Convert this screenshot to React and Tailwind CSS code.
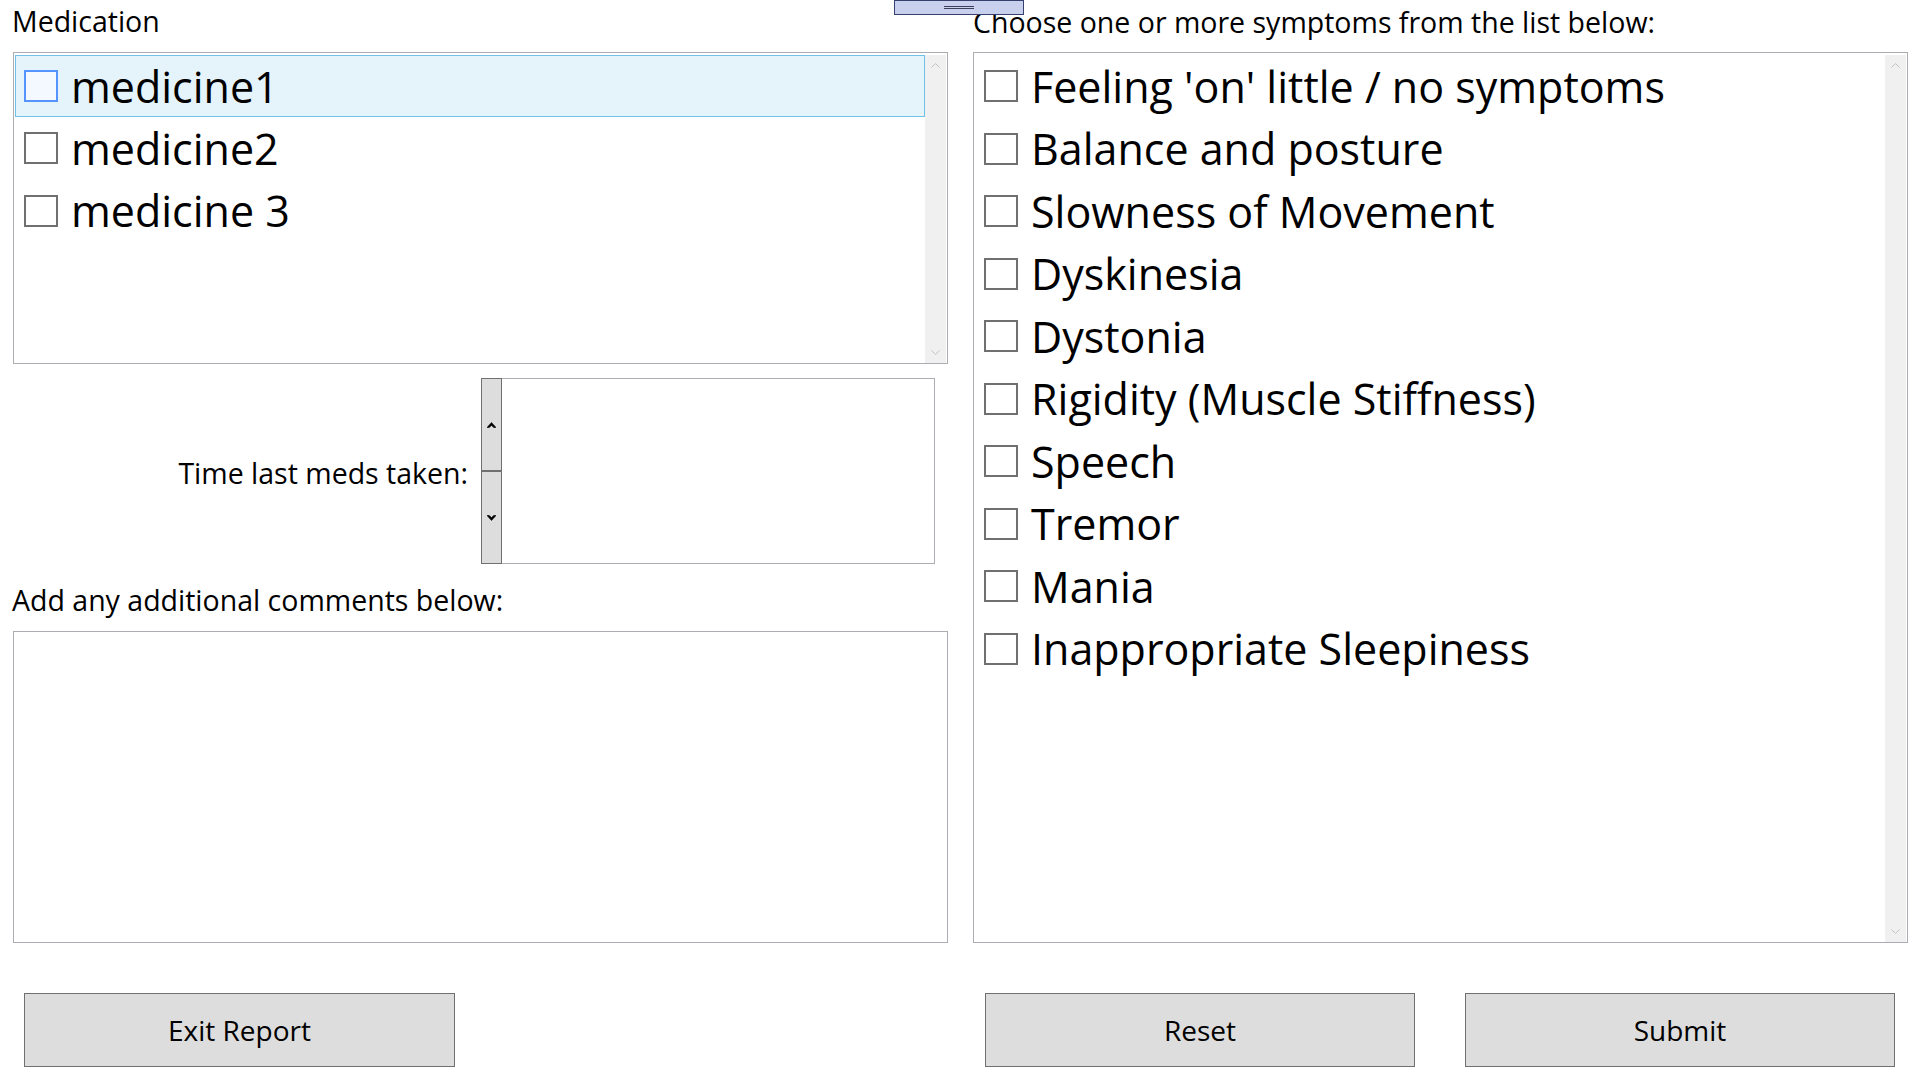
import React from "react";

function Box({ hover }) {
  return (
    <div
      className={
        hover
          ? "w-[34px] h-[32px] shrink-0 border-2 border-[#5593ff] bg-[#f3f9ff]"
          : "w-[34px] h-[32px] shrink-0 border-2 border-[#707070] bg-white"
      }
    />
  );
}

function Row({ label, hover }) {
  return (
    <div
      className={
        hover
          ? "h-[62px] flex items-center pl-[8px] border border-[#70c0e7] bg-[#e5f3fb]"
          : "h-[62.5px] flex items-center pl-[8px] border border-transparent"
      }
    >
      <Box hover={hover} />
      <span className="ml-[13px] text-[43px] leading-none whitespace-nowrap">{label}</span>
    </div>
  );
}

function Chevron({ down, color = "#c2c3c9" }) {
  return (
    <svg width="9" height="5" viewBox="0 0 9 5" className="block">
      <polyline
        points={down ? "0.5,0.5 4.5,4.5 8.5,0.5" : "0.5,4.5 4.5,0.5 8.5,4.5"}
        fill="none"
        stroke={color}
        strokeWidth="1"
      />
    </svg>
  );
}

function ScrollBar() {
  return (
    <div className="w-[21px] mt-[2px] mr-[1px] bg-[#f0f0f0] flex flex-col justify-between">
      <div className="h-[21px] flex items-center justify-center">
        <Chevron />
      </div>
      <div className="h-[21px] flex items-center justify-center">
        <Chevron down />
      </div>
    </div>
  );
}

function SpinArrow({ down }) {
  return (
    <svg width="9" height="6" viewBox="0 0 9 6" className="block">
      <polygon
        points={
          down
            ? "0,0.5 4.5,5.5 9,0.5 6.8,0.5 4.5,2.6 2.2,0.5"
            : "0,5.5 4.5,0.5 9,5.5 6.8,5.5 4.5,3.4 2.2,5.5"
        }
        fill="#000"
        stroke="#000"
        strokeWidth="0.6"
        strokeLinejoin="round"
      />
    </svg>
  );
}

export default function App() {
  const meds = ["medicine1", "medicine2", "medicine 3"];
  const symptoms = [
    "Feeling 'on' little / no symptoms",
    "Balance and posture",
    "Slowness of Movement",
    "Dyskinesia",
    "Dystonia",
    "Rigidity (Muscle Stiffness)",
    "Speech",
    "Tremor",
    "Mania",
    "Inappropriate Sleepiness",
  ];

  return (
    <div className="relative w-[1920px] h-[1076px] bg-white overflow-hidden font-['Open_Sans','Noto_Sans',sans-serif] text-black">
      <div className="grid grid-cols-[935px_935px] gap-x-[25px] pl-[13px]">
        {/* Left column */}
        <div className="flex flex-col">
          <div className="h-[52px] text-[28.5px] leading-[42px] -ml-[1px] whitespace-nowrap">Medication</div>
          <div className="h-[312px] border border-[#abadb3] flex">
            <div className="flex-1 flex flex-col pt-[2px] pl-[1px]">
              {meds.map((m, i) => (
                <Row key={m} label={m} hover={i === 0} />
              ))}
            </div>
            <ScrollBar />
          </div>

          <div className="mt-[14px] h-[186px] flex">
            <div className="w-[455px] flex items-center justify-end text-[28.5px] leading-none pt-[4px] whitespace-nowrap">
              Time last meds taken:
            </div>
            <div className="ml-[13px] w-[454px] flex">
              <div className="w-[21px] flex flex-col">
                <div className="flex-1 bg-[#dddddd] border border-b-0 border-[#707070] flex items-center justify-center">
                  <SpinArrow />
                </div>
                <div className="flex-1 bg-[#dddddd] border border-t-2 border-[#707070] flex items-center justify-center">
                  <SpinArrow down />
                </div>
              </div>
              <div className="flex-1 border border-l-0 border-[#abadb3] bg-white" />
            </div>
          </div>

          <div className="mt-[18px] mb-[13px] h-[36px] text-[28.5px] leading-[36px] -ml-[1px] whitespace-nowrap">
            Add any additional comments below:
          </div>
          <div className="h-[312px] border border-[#abadb3] bg-white" />

          <div className="mt-[50px] h-[74px] flex">
            <div className="ml-[11px] w-[431px] h-full bg-[#dddddd] border border-[#707070] flex items-center justify-center text-[28px]">
              Exit Report
            </div>
          </div>
        </div>

        {/* Right column */}
        <div className="flex flex-col">
          <div className="h-[52px] text-[28.5px] leading-[44px] whitespace-nowrap">
            Choose one or more symptoms from the list below:
          </div>
          <div className="h-[891px] border border-[#abadb3] flex">
            <div className="flex-1 flex flex-col pt-[2px] pl-[1px]">
              {symptoms.map((s) => (
                <Row key={s} label={s} />
              ))}
            </div>
            <ScrollBar />
          </div>
          <div className="mt-[50px] h-[74px] flex gap-[50px] pl-[12px]">
            <div className="w-[430px] h-full bg-[#dddddd] border border-[#707070] flex items-center justify-center text-[28px]">
              Reset
            </div>
            <div className="w-[430px] h-full bg-[#dddddd] border border-[#707070] flex items-center justify-center text-[28px]">
              Submit
            </div>
          </div>
        </div>
      </div>

      {/* Window splitter grabber overlay */}
      <div className="absolute left-[894px] top-0 w-[130px] h-[15px] bg-[#c8d0ee] border border-[#36406e] flex flex-col items-center justify-center gap-[1px] z-10">
        <div className="w-[30px] h-[1px] bg-[#3a3f5c]" />
        <div className="w-[30px] h-[1px] bg-[#3a3f5c]" />
      </div>
    </div>
  );
}
